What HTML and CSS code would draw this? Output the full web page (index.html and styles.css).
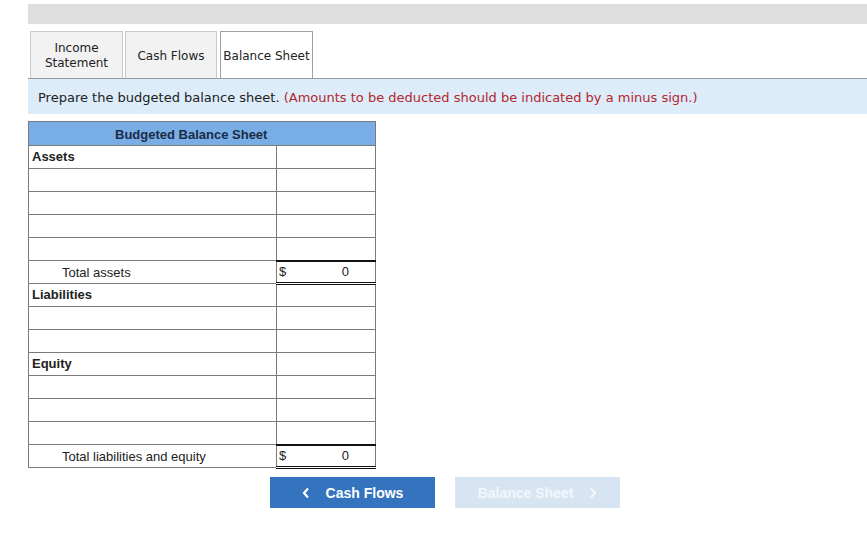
FILE: index.html
```html
<!DOCTYPE html>
<html>
<head>
<meta charset="utf-8">
<link rel="stylesheet" href="styles.css">
</head>
<body>
<div class="topbar"></div>
<div class="tabs">
  <div class="tab">Income<br>Statement</div>
  <div class="tab tab-2">Cash Flows</div>
  <div class="tab tab-active">Balance Sheet</div>
</div>
<div class="instr">Prepare the budgeted balance sheet. <span class="red">(Amounts to be deducted should be indicated by a minus sign.)</span></div>
<table class="bs">
  <tr><th colspan="2" class="head">Budgeted Balance Sheet</th></tr>
  <tr><td class="lbl sec">Assets</td><td></td></tr>
  <tr><td></td><td></td></tr>
  <tr><td></td><td></td></tr>
  <tr><td></td><td></td></tr>
  <tr><td></td><td></td></tr>
  <tr><td class="lbl total">Total assets</td><td class="val"><span class="dol">$</span><span class="num">0</span></td></tr>
  <tr><td class="lbl sec">Liabilities</td><td class="after"></td></tr>
  <tr><td></td><td></td></tr>
  <tr><td></td><td></td></tr>
  <tr><td class="lbl sec">Equity</td><td></td></tr>
  <tr><td></td><td></td></tr>
  <tr><td></td><td></td></tr>
  <tr><td></td><td></td></tr>
  <tr><td class="lbl total">Total liabilities and equity</td><td class="val"><span class="dol">$</span><span class="num">0</span></td></tr>
</table>
<div class="nav">
  <div class="btn btn-prev"><svg class="chev" width="8" height="12" viewBox="0 0 8 12"><polyline points="6,1.5 2,6 6,10.5" fill="none" stroke="currentColor" stroke-width="2.2"/></svg>Cash Flows</div>
  <div class="btn btn-next">Balance Sheet<svg class="chev chev-r" width="8" height="12" viewBox="0 0 8 12"><polyline points="2,1.5 6,6 2,10.5" fill="none" stroke="currentColor" stroke-width="2.2"/></svg></div>
</div>
</body>
</html>
```
FILE: styles.css
```css
html, body {
  margin: 0;
  padding: 0;
  background: #ffffff;
}
body {
  width: 867px;
  height: 536px;
  overflow: hidden;
  font-family: "Liberation Sans", Arial, sans-serif;
}
.topbar {
  margin: 4px 0 0 28px;
  height: 20px;
  background: #dedede;
}
.tabs {
  display: flex;
  margin: 7px 0 0 30px;
  height: 47px;
}
.tab {
  box-sizing: border-box;
  width: 93px;
  height: 47px;
  border: 1px solid #c9c9c9;
  border-bottom: none;
  background: #f2f2f2;
  font-family: "DejaVu Sans", Verdana, sans-serif;
  font-size: 12px;
  color: #222;
  display: flex;
  align-items: center;
  justify-content: center;
  text-align: center;
  line-height: 15px;
  padding-top: 2px;
}
.tab-2 {
  width: 92px;
  margin-left: 2px;
}
.tab-active {
  margin-left: 3px;
  background: #ffffff;
  border-color: #a0a0a0;
}
.instr {
  margin-left: 28px;
  border-top: 1px solid #8e9ba7;
  height: 36px;
  background: #dcecf9;
  box-sizing: border-box;
  padding: 11px 0 0 10px;
  font-family: "DejaVu Sans", Verdana, sans-serif;
  font-size: 13px;
  color: #222;
  white-space: nowrap;
}
.red {
  color: #b5262f;
}
.bs {
  margin: 7px 0 0 28px;
  border-collapse: collapse;
  width: 348px;
  font-size: 13px;
  color: #222;
}
.bs td, .bs th {
  border: 1px solid #7a7a7a;
  height: 23px;
  padding: 0;
  box-sizing: border-box;
}
.bs th {
  height: 24px;
}
.bs td:first-child {
  width: 248px;
}
.head {
  background: #79ade6;
  color: #1b2b48;
  font-weight: bold;
  font-size: 13px;
  text-align: left;
  padding-left: 86px !important;
  padding-top: 1px !important;
}
.lbl {
  padding-left: 3px !important;
}
.sec {
  font-weight: bold;
  font-size: 13px;
  vertical-align: top;
  padding-top: 3px !important;
}
.total {
  padding-left: 33px !important;
  font-size: 13px;
}
.bs td.val {
  border-top: 2px solid #111;
  border-bottom: 3px double #111;
  padding: 0 26px 0 2px;
}
.dol {
  float: left;
}
.num {
  float: right;
}
.nav {
  display: flex;
  gap: 20px;
  margin: 8px 0 0 270px;
}
.btn {
  width: 165px;
  height: 31px;
  display: flex;
  align-items: center;
  justify-content: center;
  font-weight: bold;
  font-size: 14px;
  color: #fff;
}
.btn-prev {
  background: #3474bf;
}
.btn-next {
  background: #d7e4f2;
  color: #f3f7fb;
}
.chev {
  margin-right: 16px;
}
.chev-r {
  margin-right: 0;
  margin-left: 16px;
}
```
